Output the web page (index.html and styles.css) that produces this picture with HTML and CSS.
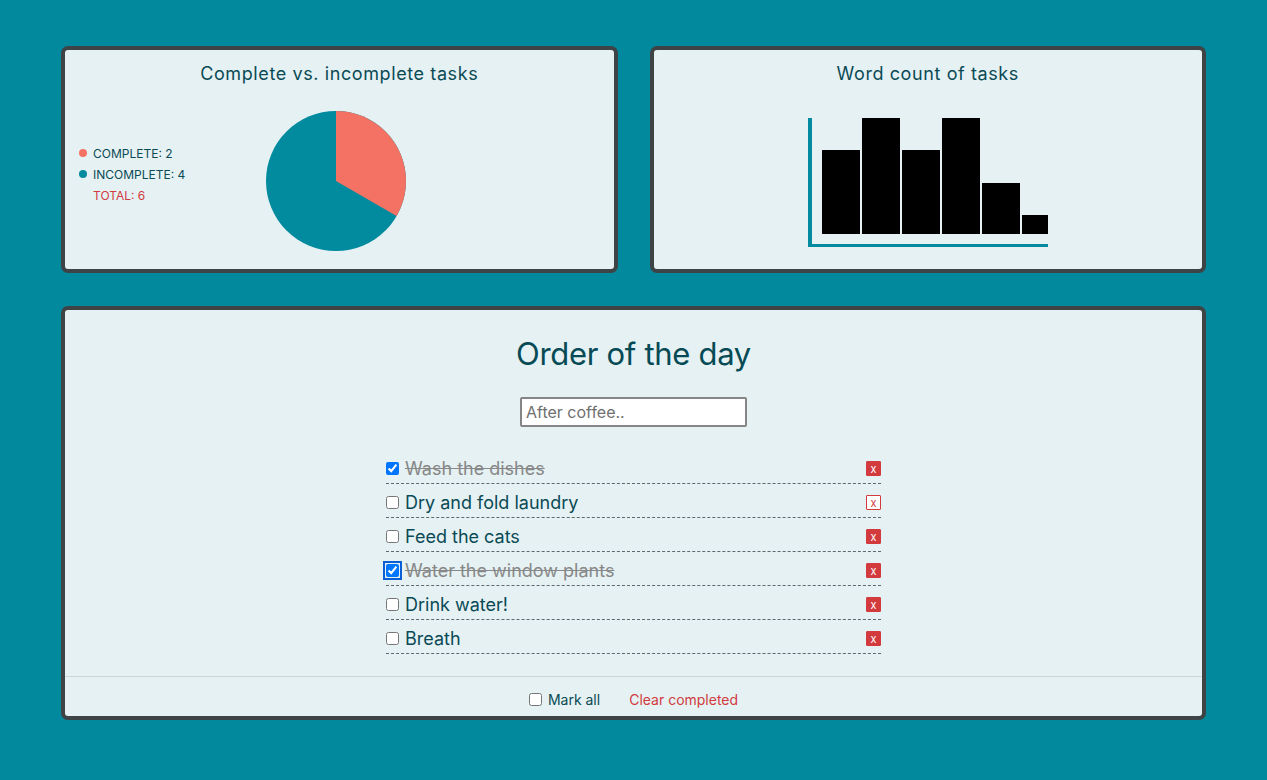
FILE: index.html
```html
<!DOCTYPE html>
<html>
<head>
<meta charset="utf-8">
<link rel="stylesheet" href="styles.css">
</head>
<body>
<div class="top">
  <section class="card chart-card">
    <h2 class="card-title">Complete vs. incomplete tasks</h2>
    <div class="pie-area">
      <ul class="legend">
        <li class="leg complete"><span class="dot"></span>COMPLETE: 2</li>
        <li class="leg incomplete"><span class="dot"></span>INCOMPLETE: 4</li>
        <li class="leg total">TOTAL: 6</li>
      </ul>
      <svg class="pie" width="140" height="140" viewBox="-70 -70 140 140">
        <circle r="70" fill="#028a9e"/>
        <path d="M0 0 L0 -70 A70 70 0 0 1 60.62 35 Z" fill="#f47264"/>
      </svg>
      <div></div>
    </div>
  </section>
  <section class="card chart-card">
    <h2 class="card-title">Word count of tasks</h2>
    <div class="bar-area">
      <svg class="bars" width="240" height="129" viewBox="0 0 240 129">
        <rect x="14" y="32" width="38" height="84" fill="#000"/>
        <rect x="54" y="0" width="38" height="116" fill="#000"/>
        <rect x="94" y="32" width="38" height="84" fill="#000"/>
        <rect x="134" y="0" width="38" height="116" fill="#000"/>
        <rect x="174" y="65" width="38" height="51" fill="#000"/>
        <rect x="214" y="97" width="38" height="19" fill="#000"/>
        <rect x="0" y="0" width="4" height="129" fill="#028a9e"/>
        <rect x="0" y="126" width="240" height="3" fill="#028a9e"/>
      </svg>
    </div>
  </section>
</div>
<section class="card todo">
  <h1 class="todo-title">Order of the day</h1>
  <input class="new-task" type="text" placeholder="After coffee..">
  <ul class="tasks">
    <li class="task done"><input type="checkbox" checked><span class="label">Wash the dishes</span><button class="del">x</button></li>
    <li class="task"><input type="checkbox"><span class="label">Dry and fold laundry</span><button class="del outline">x</button></li>
    <li class="task"><input type="checkbox"><span class="label">Feed the cats</span><button class="del">x</button></li>
    <li class="task done"><input type="checkbox" class="focused" checked><span class="label">Water the window plants</span><button class="del">x</button></li>
    <li class="task"><input type="checkbox"><span class="label">Drink water!</span><button class="del">x</button></li>
    <li class="task"><input type="checkbox"><span class="label">Breath</span><button class="del">x</button></li>
  </ul>
  <div class="footer">
    <label class="mark-all"><input type="checkbox">Mark all</label>
    <button class="clear">Clear completed</button>
  </div>
</section>
</body>
</html>
```

FILE: styles.css
```css
* { box-sizing: border-box; }
html, body { margin: 0; }
body {
  background: #02899d;
  padding: 46px 61px 0;
  font-family: "Inter", "Liberation Sans", sans-serif;
  color: #0a4a55;
}
.card {
  background: #e5f1f3;
  border: 4px solid #3e4346;
  border-radius: 7px;
}
.top {
  display: grid;
  grid-template-columns: 1fr 1fr;
  gap: 32px;
  height: 227px;
  margin-bottom: 33px;
}
.chart-card { display: flex; flex-direction: column; }
.card-title {
  margin: 12px 0 0;
  text-align: center;
  font-weight: 400;
  font-size: 18px;
  line-height: 24px;
  letter-spacing: 0.6px;
}
.pie-area {
  display: grid;
  grid-template-columns: 1fr auto 1fr;
  align-items: center;
  margin-top: 25px;
}
.legend {
  list-style: none;
  margin: 0;
  padding: 0 0 14px 14px;
  font-size: 12px;
}
.leg { display: flex; align-items: center; height: 21px; padding-left: 14px; position: relative; }
.dot {
  position: absolute; left: 0; top: 6px;
  width: 8px; height: 8px; border-radius: 50%;
}
.complete .dot { background: #f47264; }
.incomplete .dot { background: #028a9e; }
.total { color: #d23a3e; }
.pie { display: block; margin-right: 6px; }
.bar-area { display: flex; justify-content: center; margin-top: 32px; }
.bars { display: block; }

.todo {
  height: 414px;
  display: flex;
  flex-direction: column;
  align-items: center;
}
.todo-title {
  margin: 24px 0 0;
  font-weight: 400;
  font-size: 31px;
  line-height: 40px;
  letter-spacing: -0.3px;
  color: #064a55;
}
.new-task {
  margin-top: 23px;
  width: 227px;
  height: 30px;
  border: 2px solid #858585;
  border-radius: 2px;
  background: #fff;
  font-family: inherit;
  font-size: 16px;
  padding: 0 4px;
  color: #333;
}
.new-task::placeholder { color: #6f6f6f; }
.tasks {
  list-style: none;
  margin: 23px 0 0;
  padding: 0;
  width: 495px;
}
.task {
  display: flex;
  align-items: center;
  height: 34px;
  padding-top: 4px;
  border-bottom: 1px dashed #5d6a6d;
  font-size: 18px;
}
.task input { margin: 0 6px 0 0; width: 13px; height: 13px; }
.task input.focused { outline: 2px solid #0a5fd6; outline-offset: 1px; border-radius: 2px; }
.label { flex: 1; }
.done .label { color: #888; text-decoration: line-through; }
.del {
  width: 15px; height: 15px;
  padding: 0;
  border: 1px solid #d23a3e;
  background: #d23a3e;
  color: #fff;
  font-family: inherit;
  font-size: 11px;
  line-height: 12px;
  border-radius: 1px;
}
.del.outline { background: #fff; color: #d23a3e; }
.footer {
  margin-top: auto;
  align-self: stretch;
  border-top: 1px solid #cbd6d9;
  height: 40px;
  padding-top: 5px;
  display: flex;
  justify-content: center;
  align-items: center;
  gap: 29px;
  font-size: 14px;
}
.mark-all { display: flex; align-items: center; color: #0a4a55; }
.mark-all input { margin: 0 6px 0 0; width: 13px; height: 13px; }
.clear {
  background: none; border: 0; padding: 0;
  font-family: inherit; font-size: 14px; color: #d23a3e;
}
```
